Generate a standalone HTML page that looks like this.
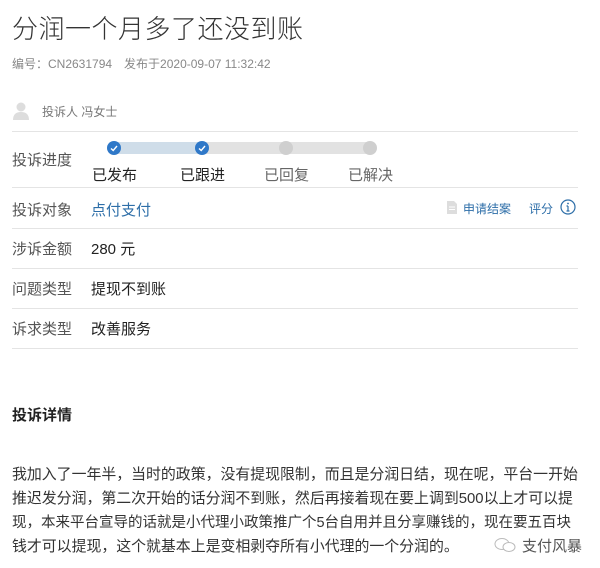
<!DOCTYPE html>
<html><head><meta charset="utf-8"><style>
*{margin:0;padding:0;box-sizing:border-box}
body{width:600px;height:568px;background:#fff;position:relative;overflow:hidden;font-family:"Liberation Sans","Noto Sans CJK SC",sans-serif;color:#222}
.a{position:absolute;white-space:nowrap}
.hr{position:absolute;left:12px;width:566px;height:1px;background:#e4e4e4}
.lab{font-size:15px;color:#555}
.val{font-size:15px;color:#222}
.dot{position:absolute;width:14px;height:14px;border-radius:50%;top:141px}
.p{font-size:14.9px;color:#333;left:12px}
</style></head><body>
<div class="a" style="left:12px;top:9px;font-size:26px;color:#333;letter-spacing:0.5px;font-weight:300">分润一个月多了还没到账</div>
<div class="a" style="left:12px;top:55px;font-size:12px;color:#888">编号：CN2631794　发布于2020-09-07 11:32:42</div>
<svg class="a" style="left:13px;top:101px" width="16" height="20" viewBox="0 0 16 20"><circle cx="8" cy="6" r="4.5" fill="#ddd"/><path d="M0 19 Q0 11 8 11 Q16 11 16 19Z" fill="#ddd"/></svg>
<div class="a" style="left:42px;top:103px;font-size:12px;color:#777">投诉人 冯女士</div>
<div class="hr" style="top:131px"></div>
<div class="a lab" style="left:12px;top:149px">投诉进度</div>
<div class="a" style="left:114px;top:142px;width:256px;height:12px;background:#e2e2e2"></div>
<div class="a" style="left:114px;top:142px;width:88px;height:12px;background:#cfdde9"></div>
<div class="dot" style="left:107px;background:#2f78c8"></div>
<div class="dot" style="left:195px;background:#2f78c8"></div>
<div class="dot" style="left:279px;background:#cfcfcf"></div>
<div class="dot" style="left:363px;background:#cfcfcf"></div>
<svg class="a" style="left:107px;top:141px" width="14" height="14"><path d="M4 7.5 L6.2 9.5 L10 5" stroke="#fff" stroke-width="1.4" fill="none"/></svg>
<svg class="a" style="left:195px;top:141px" width="14" height="14"><path d="M4 7.5 L6.2 9.5 L10 5" stroke="#fff" stroke-width="1.4" fill="none"/></svg>
<div class="a val" style="left:92px;top:164px">已发布</div>
<div class="a val" style="left:180px;top:164px">已跟进</div>
<div class="a val" style="left:264px;top:164px;color:#666">已回复</div>
<div class="a val" style="left:348px;top:164px;color:#666">已解决</div>
<div class="hr" style="top:187px"></div>
<div class="a lab" style="left:12px;top:199px">投诉对象</div>
<div class="a val" style="left:91px;top:199px;color:#2d6ea8">点付支付</div>
<svg class="a" style="left:447px;top:201px" width="10" height="13"><path d="M0 0H7L10 3V13H0Z" fill="#ddd"/><path d="M2 6H8M2 8.5H8" stroke="#fff"/></svg>
<div class="a" style="left:463px;top:200px;font-size:12px;color:#2d6ea8">申请结案</div>
<div class="a" style="left:529px;top:200px;font-size:12px;color:#2d6ea8">评分</div>
<svg class="a" style="left:560px;top:199px" width="16" height="16"><circle cx="8" cy="8" r="7" stroke="#2d6ea8" stroke-width="1.2" fill="none"/><path d="M8 7V12M6.5 12H9.5M6.5 7H8" stroke="#2d6ea8" stroke-width="1.2"/><circle cx="8" cy="4.5" r="0.9" fill="#2d6ea8"/></svg>
<div class="hr" style="top:228px"></div>
<div class="a lab" style="left:12px;top:238px">涉诉金额</div>
<div class="a val" style="left:91px;top:238px">280 元</div>
<div class="hr" style="top:268px"></div>
<div class="a lab" style="left:12px;top:278px">问题类型</div>
<div class="a val" style="left:91px;top:278px">提现不到账</div>
<div class="hr" style="top:308px"></div>
<div class="a lab" style="left:12px;top:318px">诉求类型</div>
<div class="a val" style="left:91px;top:318px">改善服务</div>
<div class="hr" style="top:348px"></div>
<div class="a" style="left:12px;top:404px;font-size:15px;font-weight:bold;color:#222">投诉详情</div>
<div class="a p" style="top:463px">我加入了一年半，当时的政策，没有提现限制，而且是分润日结，现在呢，平台一开始</div>
<div class="a p" style="top:487px">推迟发分润，第二次开始的话分润不到账，然后再接着现在要上调到500以上才可以提</div>
<div class="a p" style="top:511px;font-size:14.5px">现，本来平台宣导的话就是小代理小政策推广个5台自用并且分享赚钱的，现在要五百块</div>
<div class="a p" style="top:535px">钱才可以提现，这个就基本上是变相剥夺所有小代理的一个分润的。</div>
<svg class="a" style="left:493px;top:537px" width="24" height="16"><ellipse cx="9" cy="7" rx="7" ry="5.5" stroke="#bbb" fill="none"/><ellipse cx="16" cy="10" rx="6" ry="4.5" stroke="#bbb" fill="#fff"/></svg>
<div class="a" style="left:522px;top:535px;font-size:15px;color:#555">支付风暴</div>
</body></html>
